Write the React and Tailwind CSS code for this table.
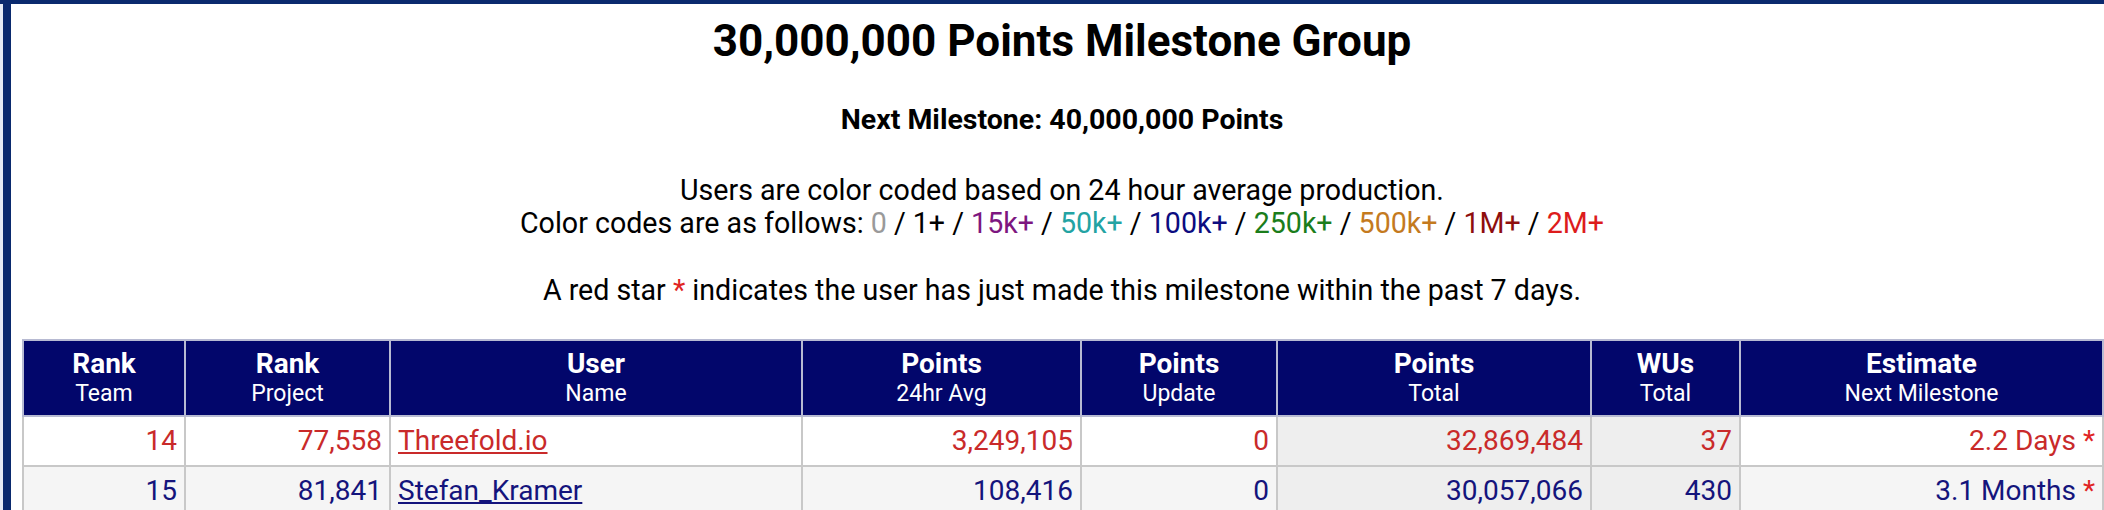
import React from 'react';

const codes = [
    { label: '0', color: 'text-[#9a9a9a]' },
    { label: '1+', color: 'text-black' },
    { label: '15k+', color: 'text-[#7d1680]' },
    { label: '50k+', color: 'text-[#23a3a3]' },
    { label: '100k+', color: 'text-[#0c0c80]' },
    { label: '250k+', color: 'text-[#1b7d1b]' },
    { label: '500k+', color: 'text-[#c47a1e]' },
    { label: '1M+', color: 'text-[#8e0e0e]' },
    { label: '2M+', color: 'text-[#dd1c1c]' },
];

const columns = [
    { top: 'Rank', sub: 'Team', w: 'w-[162px]' },
    { top: 'Rank', sub: 'Project', w: 'w-[205px]' },
    { top: 'User', sub: 'Name', w: 'w-[412px]' },
    { top: 'Points', sub: '24hr Avg', w: 'w-[279px]' },
    { top: 'Points', sub: 'Update', w: 'w-[196px]' },
    { top: 'Points', sub: 'Total', w: 'w-[314px]' },
    { top: 'WUs', sub: 'Total', w: 'w-[149px]' },
    { top: 'Estimate', sub: 'Next Milestone', w: 'w-[363px]' },
];

const rows = [
    {
        team: '14', project: '77,558', name: 'Threefold.io', avg: '3,249,105', update: '0',
        total: '32,869,484', wus: '37', estimate: '2.2 Days', text: 'text-[#c92a2a]', bg: 'bg-white',
    },
    {
        team: '15', project: '81,841', name: 'Stefan_Kramer', avg: '108,416', update: '0',
        total: '30,057,066', wus: '430', estimate: '3.1 Months', text: 'text-[#14147c]', bg: 'bg-[#f5f5f5]',
    },
];

export default function App() {
    return (
        <div className="min-h-screen bg-[#e6ecf5] border-t-4 border-[#0a2a6e] font-['Roboto',sans-serif]">
            <div className="ml-[3px] min-h-screen bg-white border-l-8 border-[#0a2a6e] pl-[11px] pr-[2px]">
                <h1 className="pt-[13px] text-center text-[44px] leading-[48px] font-bold text-black">
                    30,000,000 Points Milestone Group
                </h1>

                <p className="mt-[40px] text-center text-[28.5px] leading-[30px] font-bold text-black">
                    Next Milestone: 40,000,000 Points
                </p>

                <p className="mt-[39px] text-center text-[28.6px] leading-[33px] text-black">
                    Users are color coded based on 24 hour average production.
                    <br />
                    Color codes are as follows:{' '}
                    {codes.map((c, i) => (
                        <React.Fragment key={c.label}>
                            <span className={c.color}>{c.label}</span>
                            {i < codes.length - 1 && ' / '}
                        </React.Fragment>
                    ))}
                </p>

                <p className="mt-[34px] text-center text-[28.6px] leading-[33px] text-black">
                    A red star <span className="text-[#e02424]">*</span> indicates the user has just made this milestone within the past 7 days.
                </p>

                <table className="mt-[32px] w-full table-fixed border-collapse border-2 border-[#c3c3c3]">
                    <colgroup>
                        {columns.map((c, i) => (
                            <col key={i} className={c.w} />
                        ))}
                    </colgroup>
                    <thead>
                        <tr className="bg-[#02066b] text-white">
                            {columns.map((c, i) => (
                                <th key={i} className="h-[76px] border-2 border-[#b7bad2] text-center align-middle font-normal">
                                    <div className="text-[28px] leading-[32px] font-bold">{c.top}</div>
                                    <div className="text-[23px] leading-[28px]">{c.sub}</div>
                                </th>
                            ))}
                        </tr>
                    </thead>
                    <tbody>
                        {rows.map((r) => (
                            <tr key={r.name} className={`${r.bg} ${r.text} text-[28px] leading-[32px]`}>
                                <td className="h-[50px] border-2 border-[#c8c8c8] px-[7px] text-right">{r.team}</td>
                                <td className="border-2 border-[#c8c8c8] px-[7px] text-right">{r.project}</td>
                                <td className="border-2 border-[#c8c8c8] px-[7px] text-left">
                                    <a href="#" className="underline">{r.name}</a>
                                </td>
                                <td className="border-2 border-[#c8c8c8] px-[7px] text-right">{r.avg}</td>
                                <td className="border-2 border-[#c8c8c8] px-[7px] text-right">{r.update}</td>
                                <td className="border-2 border-[#c8c8c8] bg-[#eeeeee] px-[7px] text-right">{r.total}</td>
                                <td className="border-2 border-[#c8c8c8] bg-[#eeeeee] px-[7px] text-right">{r.wus}</td>
                                <td className="border-2 border-[#c8c8c8] px-[7px] text-right">
                                    {r.estimate} <span className="text-[#e02424]">*</span>
                                </td>
                            </tr>
                        ))}
                    </tbody>
                </table>
            </div>
        </div>
    );
}
